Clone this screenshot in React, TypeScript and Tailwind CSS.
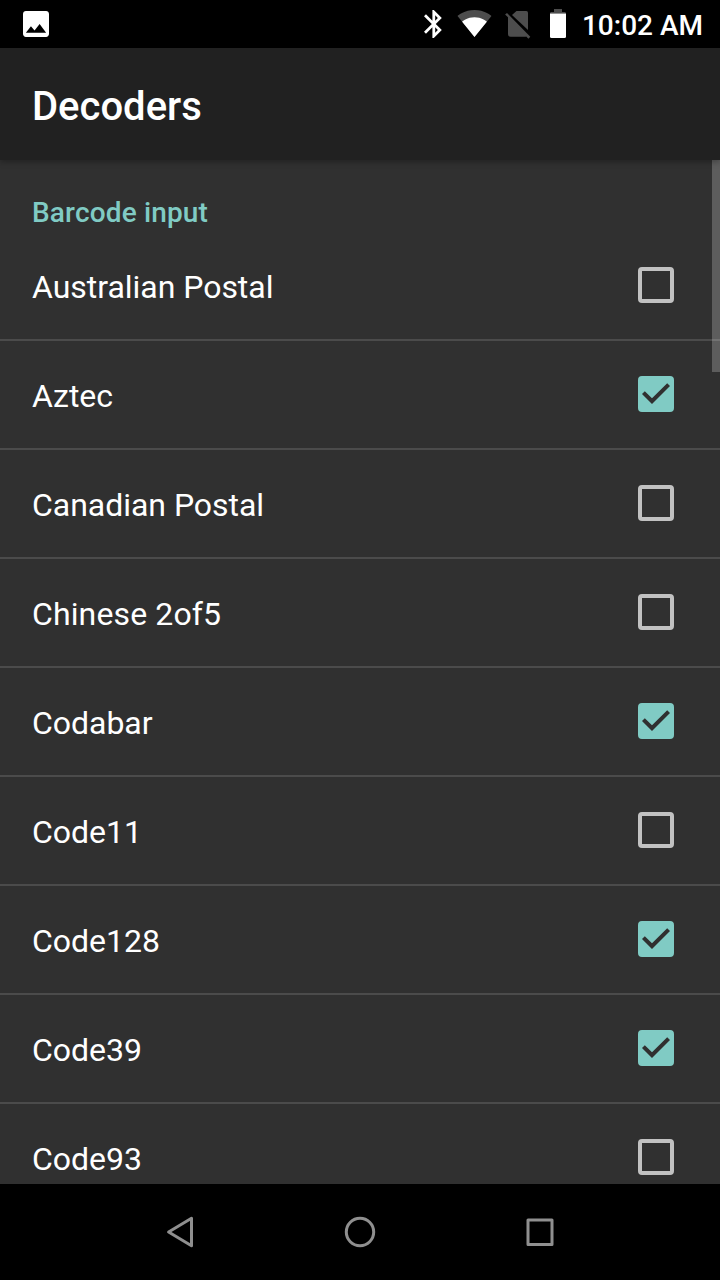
type Decoder = { name: string; checked: boolean; tracking?: string };

const decoders: Decoder[] = [
  { name: "Australian Postal", checked: false },
  { name: "Aztec", checked: true },
  { name: "Canadian Postal", checked: false },
  { name: "Chinese 2of5", checked: false, tracking: "tracking-[0.13px]" },
  { name: "Codabar", checked: true },
  { name: "Code11", checked: false },
  { name: "Code128", checked: true },
  { name: "Code39", checked: true },
  { name: "Code93", checked: false },
];

function StatusBar() {
  return (
    <div className="flex h-12 shrink-0 items-start justify-between bg-black pl-[23px] pr-[17px] text-white">
      <svg className="mt-[11px] h-[26px] w-[26px]" viewBox="3 3 18 18" fill="currentColor">
        <path d="M21 19V5c0-1.1-.9-2-2-2H5c-1.1 0-2 .9-2 2v14c0 1.1.9 2 2 2h14c1.1 0 2-.9 2-2zM8.5 13.5l2.5 3.01L14.5 12l4.5 6H5l3.5-4.5z" />
      </svg>
      <div className="flex items-start">
        <svg className="h-12 w-[18px]" viewBox="0 0 18 48" fill="currentColor">
          <path
            transform="translate(-7 7.2) scale(1.4)"
            d="M17.71 7.71L12 2h-1v7.59L6.41 5 5 6.41 10.59 12 5 17.59 6.41 19 11 14.41V22h1l5.71-5.71-4.3-4.29 4.3-4.29zM13 5.83l1.88 1.88L13 9.59V5.83zm1.88 10.46L13 18.17v-3.76l1.88 1.88z"
          />
        </svg>
        <svg className="ml-[15px] h-12 w-[35px]" viewBox="0 0 35 48">
          <g transform="translate(0 5.7) scale(1.458)">
            <path fill="#4d4d4d" d="M12.01 21.49L23.64 7c-.45-.34-4.93-4-11.64-4C5.28 3 .81 6.66.36 7l11.63 14.49.01.01.01-.01z" />
            <path fill="#fff" d="M3.53 10.95l8.46 10.54.01.01.01-.01 8.46-10.54C20.04 10.62 16.81 8 12 8c-4.81 0-8.04 2.62-8.47 2.95z" />
          </g>
        </svg>
        <svg className="ml-[13px] h-12 w-[26px]" viewBox="0 0 26 48" fill="#4d4d4d">
          <path d="M11.5 11H21.3Q23 11 23 12.8V30.1L7 14.9z" />
          <path d="M2 12.9L25.3 36.8 23.4 38.7 21.2 36.5Q20.8 36.8 20 36.8H5.5Q3 36.8 3 34.3V17.2L.1 14.4z" />
        </svg>
        <svg className="ml-[19px] h-12 w-4" viewBox="0 0 16 48">
          <path fill="#4d4d4d" d="M4 9h8v3h3q1 0 1 1.5H0Q0 12 1 12h3z" />
          <path fill="#fff" d="M0 13.5h16v23q0 1.500-1.500 1.500h-13Q0 38 0 36.500z" />
        </svg>
        <span className="ml-4 mt-2.5 text-[28px] font-medium leading-8 whitespace-nowrap">10:02 AM</span>
      </div>
    </div>
  );
}

function Checkbox({ checked }: { checked: boolean }) {
  return checked ? (
    <svg className="mb-px h-9 w-9 shrink-0 text-[#80cbc4]" viewBox="0 0 36 36" fill="currentColor" role="checkbox" aria-checked="true">
      <path d="M4 0h28a4 4 0 0 1 4 4v28a4 4 0 0 1-4 4H4a4 4 0 0 1-4-4V4a4 4 0 0 1 4-4zM14 28L32 10l-2.820-2.820L14 22.340 6.820 15.180 4 18z" />
    </svg>
  ) : (
    <span className="mb-px h-9 w-9 shrink-0 rounded border-4 border-[#c1c1c1]" role="checkbox" aria-checked="false" />
  );
}

function DecoderRow({ name, checked, tracking = "-tracking-[0.03px]" }: Decoder) {
  return (
    <li className="flex h-[109px] shrink-0 items-center justify-between border-b-2 border-[#4b4b4b] pl-8 pr-[46px]">
      <span className={`pt-[3px] text-[32px] leading-10 text-white ${tracking}`}>{name}</span>
      <Checkbox checked={checked} />
    </li>
  );
}

function NavigationBar() {
  return (
    <nav className="flex h-24 shrink-0 items-center justify-center gap-[132px] bg-black">
      <svg className="h-12 w-12" viewBox="0 0 48 48" fill="none" stroke="#8f8f8f" strokeWidth="3" strokeLinejoin="round">
        <path d="M12.600 24L35.500 10.300v27.400z" />
      </svg>
      <svg className="h-12 w-12" viewBox="0 0 48 48" fill="none" stroke="#8f8f8f" strokeWidth="3">
        <circle cx="24" cy="24" r="13.7" />
      </svg>
      <svg className="h-12 w-12" viewBox="0 0 48 48" fill="none" stroke="#8f8f8f" strokeWidth="3" strokeLinejoin="round">
        <path d="M12 12h24v24.500H12z" />
      </svg>
    </nav>
  );
}

export default function App() {
  return (
    <div className="flex h-[1280px] w-[720px] flex-col overflow-hidden bg-[#303030] font-[Roboto,sans-serif]">
      <StatusBar />
      <header className="z-10 flex h-28 shrink-0 items-center bg-[#212121] px-8 shadow-[0_2px_6px_rgba(0,0,0,0.3)]">
        <h1 className="pt-1.5 text-[40px] font-medium leading-[48px] text-white">Decoders</h1>
      </header>
      <main className="relative min-h-0 flex-1 overflow-hidden">
        <h2 className="flex h-[72px] items-end px-8 pb-[3px] text-[28px] font-medium leading-8 tracking-[0.16px] text-[#80cbc4]">
          Barcode input
        </h2>
        <ul className="flex flex-col">
          {decoders.map((decoder) => (
            <DecoderRow key={decoder.name} {...decoder} />
          ))}
        </ul>
        <div className="absolute right-0 top-0 h-[212px] w-2 bg-white/22" />
      </main>
      <NavigationBar />
    </div>
  );
}
